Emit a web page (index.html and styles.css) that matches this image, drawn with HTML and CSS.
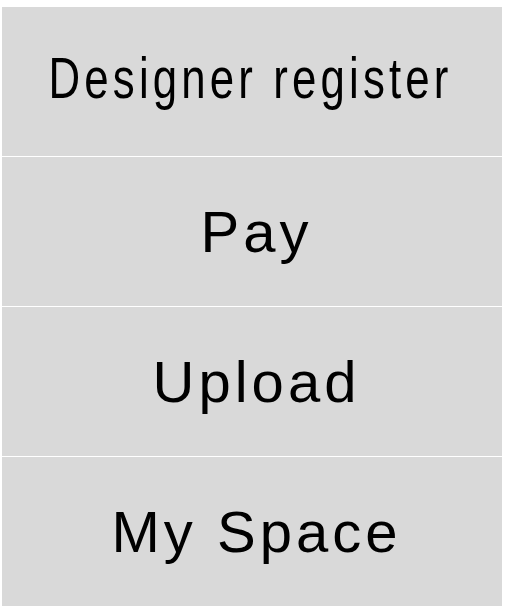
FILE: index.html
```html
<!DOCTYPE html>
<html>
<head>
<meta charset="utf-8">
<link rel="stylesheet" href="styles.css">
</head>
<body>
<div class="menu">
  <div class="item"><span class="label condensed">Designer register</span></div>
  <div class="item"><span class="label">Pay</span></div>
  <div class="item"><span class="label">Upload</span></div>
  <div class="item"><span class="label">My Space</span></div>
</div>
</body>
</html>
```

FILE: styles.css
```css
html, body {
  margin: 0;
  padding: 0;
  background: #ffffff;
}
.menu {
  margin: 7px 0 0 2px;
  width: 500px;
  display: flex;
  flex-direction: column;
  gap: 1px;
}
.item {
  height: 149px;
  background: #d9d9d9;
  display: flex;
  align-items: center;
  justify-content: center;
}
.label {
  font-family: "Liberation Sans", Arial, sans-serif;
  font-size: 58px;
  letter-spacing: 4px;
  padding-left: 9px;
  color: #000000;
  display: inline-block;
  white-space: nowrap;
  -webkit-font-smoothing: none;
}
.condensed {
  letter-spacing: 5.5px;
  padding-left: 0;
  margin-right: 3px;
  margin-bottom: 8px;
  transform: scaleX(0.755);
}
```
